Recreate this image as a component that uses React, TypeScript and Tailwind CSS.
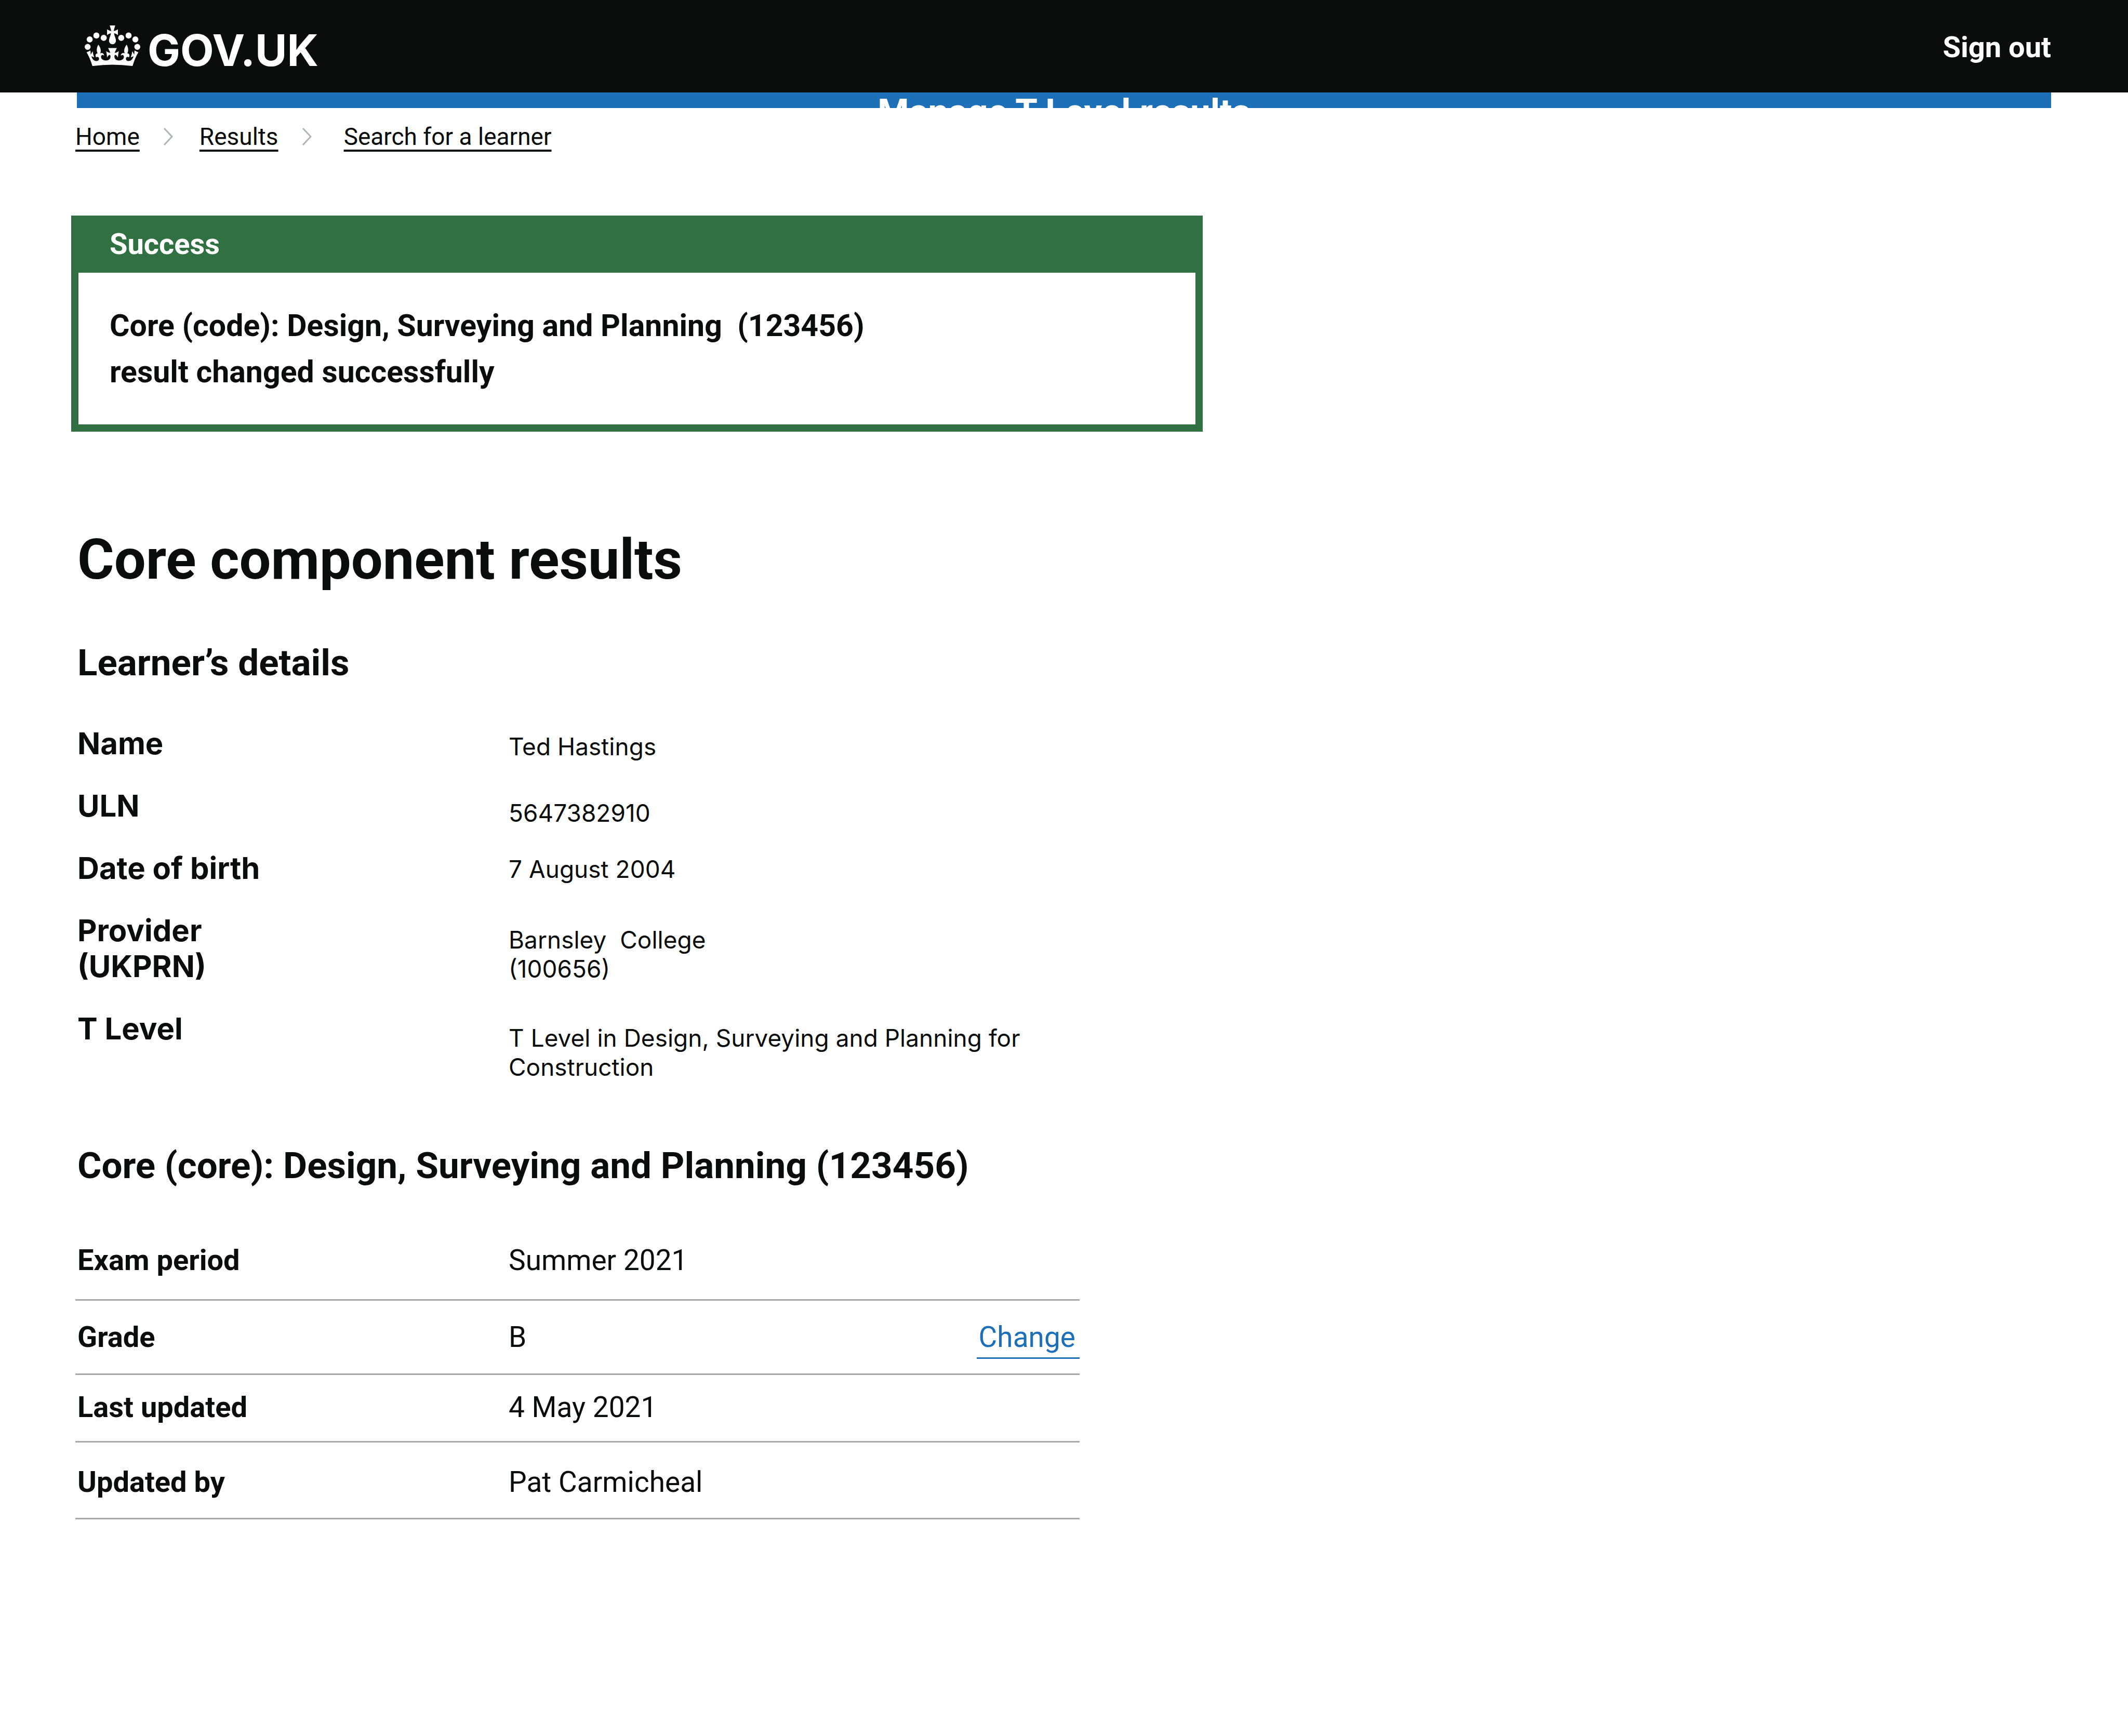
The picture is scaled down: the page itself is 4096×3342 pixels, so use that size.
import type { ReactNode } from 'react';

function Crown({ className }: { className: string }) {
  return (
    <svg viewBox="30 21 432 314" className={className} fill="currentColor" aria-hidden="true">
      <circle cx="53" cy="187" r="23" />
      <circle cx="69" cy="129" r="23.5" />
      <circle cx="121" cy="99" r="23.5" />
      <circle cx="178" cy="117" r="23.5" />
      <circle cx="314" cy="117" r="23.5" />
      <circle cx="371" cy="99" r="23.5" />
      <circle cx="424" cy="129" r="23.5" />
      <circle cx="439" cy="187" r="23" />
      <path d="M225 21H267L255 64Q272 62 288 51V95Q272 82 258 81C260 100 273 122 273 140A27 27 0 0 1 219 140C219 122 232 100 234 81Q220 82 204 95V51Q220 62 237 64Z" />
      <path
        id="crown-half"
        d="M247 325Q168 325 90 336C78 295 64 261 45 229L75 215L77 248L92 220C94 236 98 252 104 269L82 260C88 280 100 297 121 297C136 297 144 287 141 275C138 262 122 262 119 270C108 252 118 236 131 238C122 222 120 198 136 170C156 196 160 222 149 238C164 228 182 238 181 257C174 244 157 248 157 264C157 282 174 293 196 293C218 293 231 280 231 262C231 254 228 250 223 249Q210 254 204 270Q202 244 197 219Q212 233 230 233L212 196H247Z"
      />
      <use href="#crown-half" transform="translate(492 0) scale(-1 1)" />
    </svg>
  );
}

function Chevron() {
  return (
    <svg viewBox="0 0 19 34" className="h-[34px] w-[19px] text-[#b1b4b6]" fill="none" stroke="currentColor" strokeWidth="3" aria-hidden="true">
      <path d="M2 1L17 17L2 33" />
    </svg>
  );
}

function Crumb({ children }: { children: ReactNode }) {
  return (
    <a href="#" className="underline decoration-4 underline-offset-[9px] [text-decoration-skip-ink:none]">
      {children}
    </a>
  );
}

const learner: { label: ReactNode; value: ReactNode; pad: string }[] = [
  { label: 'Name', value: 'Ted Hastings', pad: 'pt-3' },
  { label: 'ULN', value: '5647382910', pad: 'pt-5' },
  { label: 'Date of birth', value: '7 August 2004', pad: 'pt-2' },
  { label: <>Provider<br />(UKPRN)</>, value: <>Barnsley&nbsp; College<br />(100656)</>, pad: 'pt-6' },
  { label: 'T Level', value: 'T Level in Design, Surveying and Planning for Construction', pad: 'pt-6' },
];

const result: { label: string; value: string; pad: string; change?: boolean }[] = [
  { label: 'Exam period', value: 'Summer 2021', pad: 'pb-[43px]' },
  { label: 'Grade', value: 'B', pad: 'py-[38px]', change: true },
  { label: 'Last updated', value: '4 May 2021', pad: 'pt-[30px] pb-[33px]' },
  { label: 'Updated by', value: 'Pat Carmicheal', pad: 'pt-[44px] pb-[37px]' },
];

export default function App() {
  return (
    <div className="min-h-screen bg-white font-['Roboto',sans-serif] text-[#0b0c0c]">
      <header className="flex items-start justify-between bg-[#0b0c0c] px-[148px] pt-[47px] pb-[31px] text-white">
        <a href="#" className="flex items-baseline gap-[14px] pl-[15px]">
          <Crown className="h-[78px] w-[107px]" />
          <span className="font-['Inter',sans-serif] text-[84px] leading-[100px] font-bold">GOV.UK</span>
        </a>
        <a href="#" className="mt-3 text-[56px] leading-[64px] font-bold">Sign out</a>
      </header>

      <div className="mx-[148px] h-[30px] overflow-hidden bg-[#1d70b8] text-center text-[69px] leading-[76px] font-bold text-white">
        Manage T Level results
      </div>

      <div className="px-[145px] pt-[27px]">
        <nav aria-label="Breadcrumb" className="flex items-center text-[46px] leading-[56px]">
          <Crumb>Home</Crumb>
          <span className="pr-[51px] pl-[45px]"><Chevron /></span>
          <Crumb>Results</Crumb>
          <span className="pr-[62px] pl-[45px]"><Chevron /></span>
          <Crumb>Search for a learner</Crumb>
        </nav>

        <main>
          <section aria-labelledby="banner-title" className="-ml-2 mt-[124px] max-w-[2178px] border-[14px] border-t-0 border-[#317042] bg-white">
            <h2 id="banner-title" className="bg-[#317042] px-[60px] py-[23px] text-[56px] leading-[64px] font-bold text-white">
              Success
            </h2>
            <p className="px-[60px] py-[57px] text-[59px] leading-[89px] font-bold">
              Core (code): Design, Surveying and Planning&nbsp; (123456)
              <br />
              result changed successfully
            </p>
          </section>

          <h1 className="mt-[182px] pl-1 text-[108px] leading-[128px] font-bold">Core component results</h1>

          <h2 className="mt-[93px] pl-1 text-[71px] leading-[84px] font-bold">Learner’s details</h2>

          <dl className="mt-[79px] max-w-[1940px] font-['Inter',sans-serif]">
            {learner.map((row, i) => (
              <div key={i} className="flex">
                <dt className="w-[832px] shrink-0 pb-[51px] pl-1 text-[58px] leading-[69px] font-bold">{row.label}</dt>
                <dd className={`pl-[2px] text-[46px] leading-[56px] ${row.pad}`}>{row.value}</dd>
              </div>
            ))}
          </dl>

          <h2 className="mt-[120px] pl-1 text-[71px] leading-[84px] font-bold">
            Core (core): Design, Surveying and Planning (123456)
          </h2>

          <dl className="mt-[108px] max-w-[1933px] leading-[64px]">
            {result.map((row) => (
              <div key={row.label} className={`flex border-b-3 border-[#a6a8a9] ${row.pad}`}>
                <dt className="w-[832px] shrink-0 pl-1 text-[56px] font-bold">{row.label}</dt>
                <dd className="flex-1 pl-[2px] text-[55px]">{row.value}</dd>
                {row.change && (
                  <dd className="text-[55px]">
                    <a href="#" className="-mb-[10px] block border-b-3 border-[#1d70b8] pr-2 pb-[7px] pl-1 text-[#1d70b8]">Change</a>
                  </dd>
                )}
              </div>
            ))}
          </dl>
        </main>
      </div>
    </div>
  );
}
